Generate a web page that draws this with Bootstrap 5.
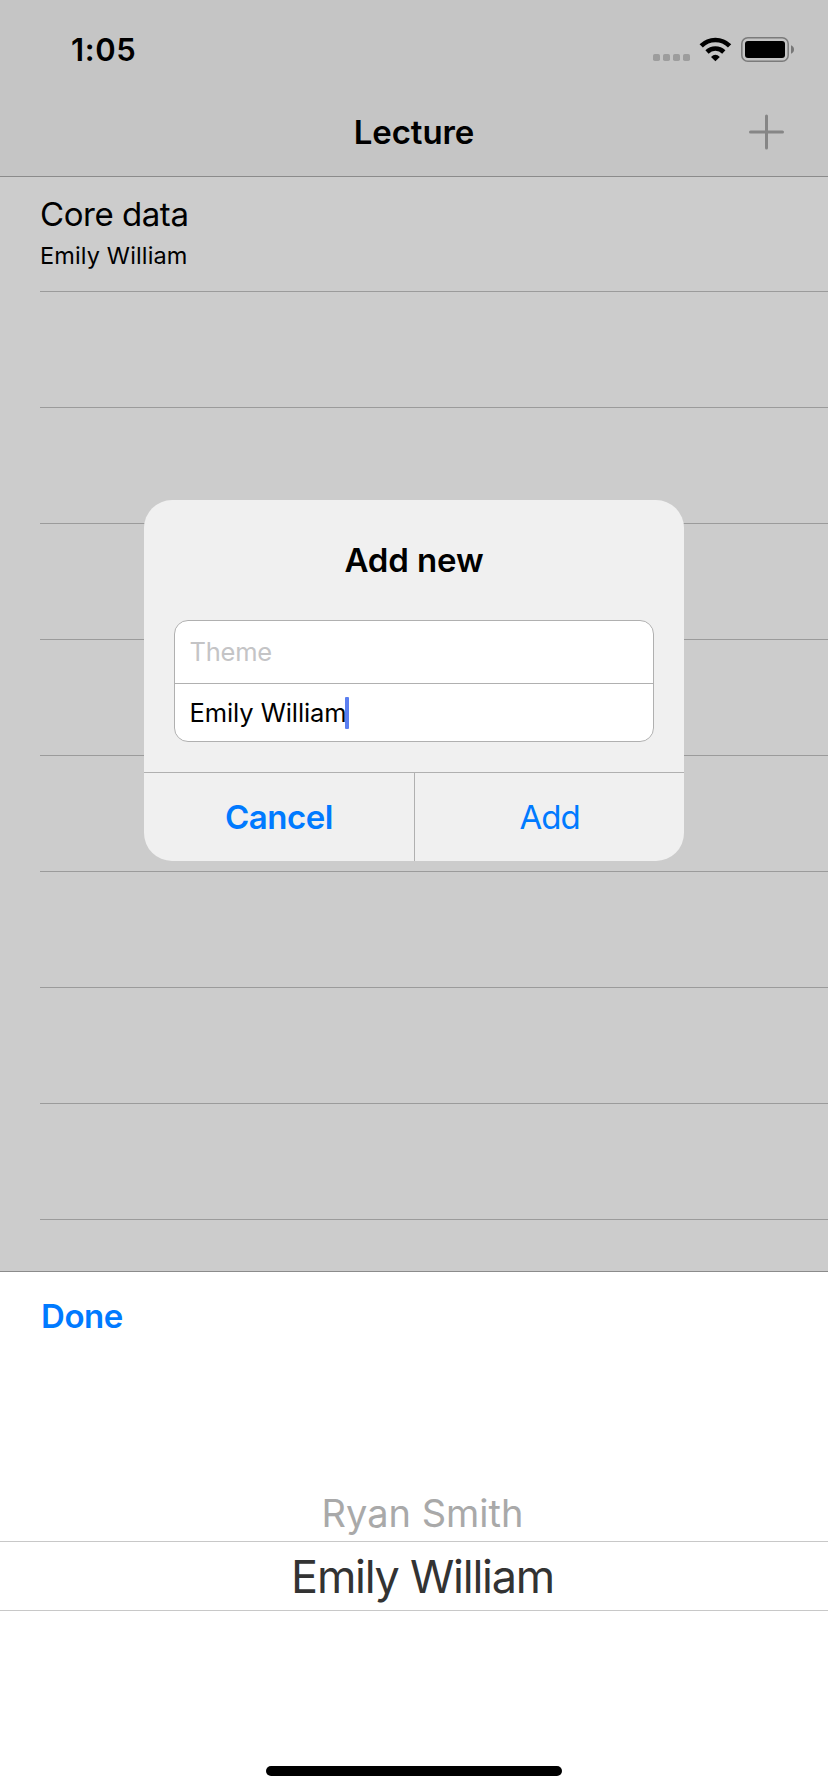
<!DOCTYPE html>
<html lang="en">
<head>
<meta charset="utf-8">
<meta name="viewport" content="width=device-width, initial-scale=1">
<title>Lecture</title>
<link href="https://cdn.jsdelivr.net/npm/bootstrap@5.3.0/dist/css/bootstrap.min.css" rel="stylesheet">
<style>
  body { font-family: Inter, "Liberation Sans", sans-serif; color: #000; background: #ccc; line-height: 1; }
  .screen { width: 828px; height: 1792px; }
  .top-area { height: 177px; background: #c5c5c5; border-bottom: 1px solid #8b8b8b; }
  .status { height: 88px; padding: 11px 34px 0 71px; }
  .clock { font-size: 31px; font-weight: 600; letter-spacing: .6px; }
  .icons { gap: 9px; }
  .title-row { display: grid; grid-template-columns: 1fr auto 1fr; height: 88px; padding: 0 43px; }
  .heading { grid-column: 2; font-size: 33px; font-weight: 600; margin: 0; padding-top: 2px; letter-spacing: -.1px; }
  .lectures { height: 1094px; }
  .lecture { height: 116px; margin-left: 40px; border: 0; border-bottom: 1px solid #9b9b9b; background: none; padding: 0; color: #000; }
  .lecture:first-child { height: 115px; padding-top: 18px; }
  .lecture:last-child { border-bottom: 0; height: 51px; }
  .subject { font-size: 33px; line-height: 38px; letter-spacing: -.45px; }
  .teacher { font-size: 23.5px; line-height: 30px; margin-top: 8px; letter-spacing: .14px; }
  .panel { height: 521px; background: #fff; border-top: 1px solid #8b8b8b; }
  .link-blue { color: #007aff; border: 0; border-radius: 0; padding: 0; background: none; font-size: 33px; line-height: 1; letter-spacing: -.45px; }
  .toolbar { height: 88px; padding: 0 41px; }
  .wheel-pad { height: 111px; }
  .choice { height: 70px; font-size: 38px; color: #a9a9a9; padding: 14px 0 0 17px; }
  .choice-on { font-size: 45px; color: #333; letter-spacing: -1.25px; border-top: 1px solid #c8c8c8; border-bottom: 1px solid #c8c8c8; padding: 0 0 0 17px; }
  .home-bar { width: 296px; height: 10px; border-radius: 5px; background: #000; margin-bottom: 16px; }
  .alert-box { left: 144px; top: 500px; width: 540px; height: 361px; border-radius: 28px; background: #f0f0f0; overflow: hidden; }
  .alert-title { height: 120px; }
  .fields { width: 480px; height: 122px; margin: 0 auto; border: 1px solid #b0b0b0; border-radius: 14px; background: #fff; font-size: 25.5px; letter-spacing: -.08px; }
  .field { padding-left: 14.5px; }
  .field-a { height: 63px; border-bottom: 1px solid #b0b0b0; color: #c4c4c6; letter-spacing: -.25px; }
  .field-b { height: 57px; }
  .caret { width: 4px; height: 32px; margin-left: -1.5px; border-radius: 1px; background: #5b7ff0; }
  .actions { margin-top: 30px; height: 89px; border-top: 1px solid #b0b0b0; }
  .actions > .link-blue + .link-blue { border-left: 1px solid #b0b0b0; letter-spacing: -1px; }
</style>
</head>
<body>
<div class="screen position-relative overflow-hidden d-flex flex-column">
  <header class="top-area flex-shrink-0">
    <div class="status d-flex justify-content-between align-items-center">
      <span class="clock">1:05</span>
      <div class="icons d-flex">
        <svg width="37" height="25" fill="#9d9d9d"><rect y="17" width="7" height="7" rx="1.8"/><rect x="10" y="17" width="7" height="7" rx="1.8"/><rect x="20" y="17" width="7" height="7" rx="1.8"/><rect x="30" y="17" width="7" height="7" rx="1.8"/></svg>
        <svg width="33" height="25" fill="none" stroke="#000" stroke-width="4.6"><path d="M2.2 8.9A20 20 0 0 1 30.6 8.9"/><path d="M8 15A12 12 0 0 1 24.8 15"/><path d="M12 19.9Q16.4 15.7 20.8 19.9L16.4 24.3Z" fill="#000" stroke="none"/></svg>
        <svg width="53" height="25"><rect x=".8" y=".8" width="46.4" height="23.4" rx="6" fill="none" stroke="#7b7b7b" stroke-width="1.6"/><rect x="4" y="4" width="40" height="17" rx="3" /><path d="M50 8.3Q53 9.5 53 12.5T50 16.7Z" fill="#777"/></svg>
      </div>
    </div>
    <div class="title-row align-items-center">
      <h1 class="heading">Lecture</h1>
      <svg class="ms-auto" width="37" height="36" stroke="#868686" stroke-width="3" stroke-linecap="round"><path d="M2.5 18H34.5M18.5 2V34"/></svg>
    </div>
  </header>
  <main class="lectures list-group list-group-flush flex-shrink-0">
    <div class="lecture"><div class="subject">Core data</div><div class="teacher">Emily William</div></div>
    <div class="lecture"></div><div class="lecture"></div><div class="lecture"></div><div class="lecture"></div>
    <div class="lecture"></div><div class="lecture"></div><div class="lecture"></div><div class="lecture"></div>
    <div class="lecture"></div>
  </main>
  <section class="panel flex-shrink-0 d-flex flex-column">
    <div class="toolbar d-flex align-items-center"><button class="btn link-blue fw-semibold">Done</button></div>
    <div class="wheel-pad"></div>
    <div class="choice d-flex align-items-center justify-content-center">Ryan Smith</div>
    <div class="choice choice-on d-flex align-items-center justify-content-center">Emily William</div>
    <div class="home-bar mt-auto mx-auto"></div>
  </section>
  <div class="alert-box position-absolute" role="dialog">
    <div class="alert-title d-flex align-items-center justify-content-center"><h2 class="heading">Add new</h2></div>
    <div class="fields">
      <div class="field field-a d-flex align-items-center">Theme</div>
      <div class="field field-b d-flex align-items-center"><span>Emily William</span><span class="caret"></span></div>
    </div>
    <div class="actions d-flex">
      <button class="btn link-blue flex-fill w-50 fw-semibold">Cancel</button>
      <button class="btn link-blue flex-fill w-50">Add</button>
    </div>
  </div>
</div>
<script src="https://cdn.jsdelivr.net/npm/bootstrap@5.3.0/dist/js/bootstrap.bundle.min.js"></script>
</body>
</html>
